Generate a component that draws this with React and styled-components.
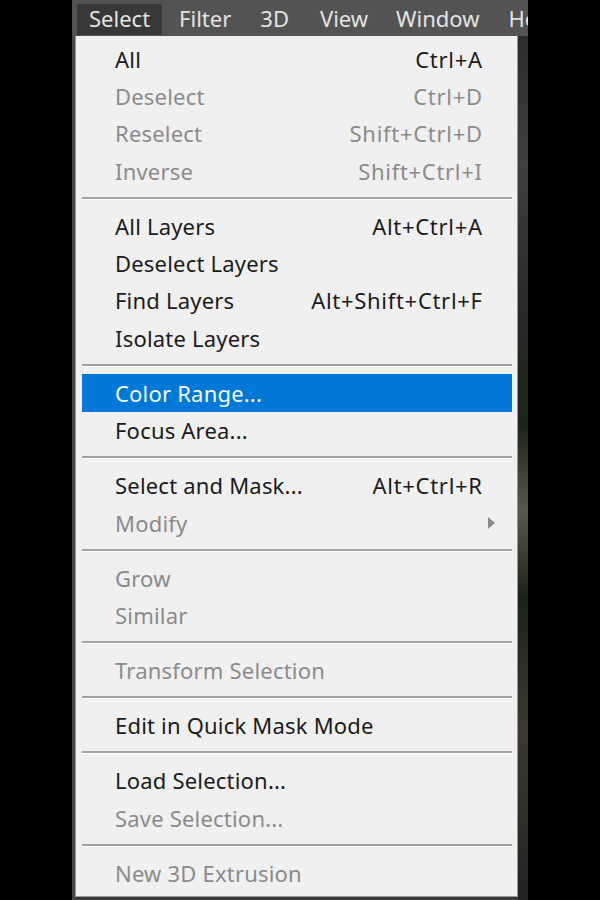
import React from 'react'
import styled, { createGlobalStyle } from 'styled-components'

const Global = createGlobalStyle`
  html, body { margin: 0; padding: 0; background: #000; }
  body { width: 600px; height: 900px; overflow: hidden; }
`

const Page = styled.div`
  width: 600px;
  height: 900px;
  background: #000;
  display: flex;
  justify-content: flex-start;
`

const AppStrip = styled.div`
  margin-left: 72px;
  width: 456px;
  height: 900px;
  display: flex;
  flex-direction: column;
  background: #3a3a3a;
`

const MenuBar = styled.div`
  height: 36px;
  flex-shrink: 0;
  background: #535353;
  display: flex;
  align-items: flex-end;
  padding-left: 5px;
  font-family: "Noto Sans", "Open Sans", sans-serif;
  font-size: 22px;
  color: #e4e4e4;
  overflow: hidden;
  white-space: nowrap;
`

const BarItem = styled.div`
  height: 31px;
  line-height: 28px;
  padding: 0 12px;
  margin-right: ${p => p.$gap ?? 5}px;
  border-radius: 3px 3px 0 0;
  background: ${p => (p.$active ? '#383838' : 'transparent')};
  margin-bottom: 1px;
  flex-shrink: 0;
`

const Body = styled.div`
  flex: 1;
  display: flex;
`

const Gutter = styled.div`
  width: 3px;
  background: #474747;
`

const Photo = styled.div`
  width: 10px;
  background: linear-gradient(180deg, #2c2c2c 0%, #404040 15%, #2a2a2a 30%, #1c2418 45%, #5a5a4a 55%, #1a2216 65%, #3c3a30 80%, #222 100%);
`

const Menu = styled.div`
  width: 443px;
  height: 861px;
  box-sizing: border-box;
  background: #f0f0f0;
  border: 1px solid #979797;
  border-top: none;
  padding: 4px 5px 0 6px;
  display: flex;
  flex-direction: column;
  font-family: "Noto Sans", "Open Sans", sans-serif;
  font-size: 22px;
`

const Row = styled.div`
  height: 37.35px;
  flex-shrink: 0;
  display: flex;
  align-items: center;
  padding: 0 30px 0 33px;
  color: ${p => (p.$active ? '#f4f8ff' : p.$disabled ? '#8b8b8b' : '#1b1b1b')};
  background: ${p => (p.$active ? '#0078d7' : 'transparent')};
  position: relative;
  white-space: nowrap;
`

const Label = styled.span`
  flex: 1;
  letter-spacing: 0.2px;
`

const Shortcut = styled.span`
  letter-spacing: 0.7px;
  margin-right: -0.7px;
`

const Arrow = styled.span`
  position: absolute;
  right: 17px;
  top: 50%;
  margin-top: -6px;
  width: 0;
  height: 0;
  border-top: 6px solid transparent;
  border-bottom: 6px solid transparent;
  border-left: 7px solid #8b8b8b;
`

const Sep = styled.div`
  height: 17.75px;
  flex-shrink: 0;
  display: flex;
  align-items: center;
  &::before {
    content: '';
    display: block;
    width: 100%;
    height: 2px;
    background: #a3a3a3;
    border-bottom: 1px solid #ffffff;
  }
`

const items = [
  { l: 'All', s: 'Ctrl+A' },
  { l: 'Deselect', s: 'Ctrl+D', d: true },
  { l: 'Reselect', s: 'Shift+Ctrl+D', d: true },
  { l: 'Inverse', s: 'Shift+Ctrl+I', d: true },
  '-',
  { l: 'All Layers', s: 'Alt+Ctrl+A' },
  { l: 'Deselect Layers' },
  { l: 'Find Layers', s: 'Alt+Shift+Ctrl+F' },
  { l: 'Isolate Layers' },
  '-',
  { l: 'Color Range...', a: true },
  { l: 'Focus Area...' },
  '-',
  { l: 'Select and Mask...', s: 'Alt+Ctrl+R' },
  { l: 'Modify', d: true, sub: true },
  '-',
  { l: 'Grow', d: true },
  { l: 'Similar', d: true },
  '-',
  { l: 'Transform Selection', d: true },
  '-',
  { l: 'Edit in Quick Mask Mode' },
  '-',
  { l: 'Load Selection...' },
  { l: 'Save Selection...', d: true },
  '-',
  { l: 'New 3D Extrusion', d: true },
]

export default function App() {
  return (
    <Page>
      <Global />
      <AppStrip>
        <MenuBar>
          <BarItem $active>Select</BarItem>
          <BarItem>Filter</BarItem>
          <BarItem $gap={7}>3D</BarItem>
          <BarItem $gap={4}>View</BarItem>
          <BarItem>Window</BarItem>
          <BarItem>Help</BarItem>
        </MenuBar>
        <Body>
          <Gutter />
          <Menu>
            {items.map((it, i) =>
              it === '-' ? (
                <Sep key={i} />
              ) : (
                <Row key={i} $disabled={it.d} $active={it.a}>
                  <Label>{it.l}</Label>
                  {it.s && <Shortcut>{it.s}</Shortcut>}
                  {it.sub && <Arrow />}
                </Row>
              )
            )}
          </Menu>
          <Photo />
        </Body>
      </AppStrip>
    </Page>
  )
}
